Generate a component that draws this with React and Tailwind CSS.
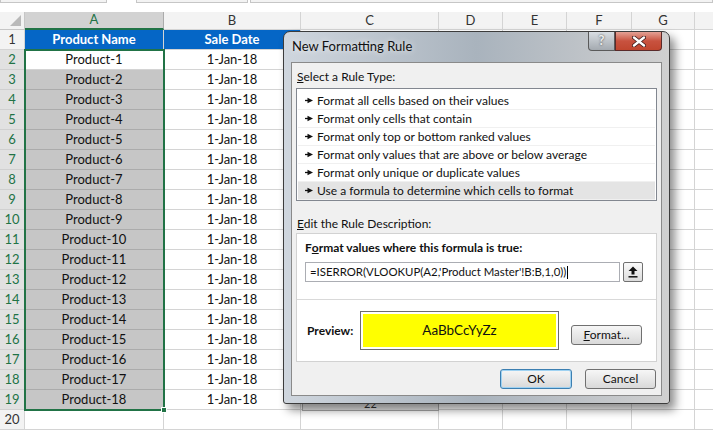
import React from 'react';

const cols = [
  { l: 'A', w: 'w-[139px]' },
  { l: 'B', w: 'w-[137px]' },
  { l: 'C', w: 'w-[138px]' },
  { l: 'D', w: 'w-[64px]' },
  { l: 'E', w: 'w-[64px]' },
  { l: 'F', w: 'w-[65px]' },
  { l: 'G', w: 'w-[63px]' },
];

const rules = [
  'Format all cells based on their values',
  'Format only cells that contain',
  'Format only top or bottom ranked values',
  'Format only values that are above or below average',
  'Format only unique or duplicate values',
  'Use a formula to determine which cells to format',
];

const Arrow = () => (
  <svg width="8" height="7" viewBox="0 0 8 7" className="mr-[4px] shrink-0">
    <path d="M0 3.5h3" stroke="#111" strokeWidth="1.3" />
    <path d="M2.5 0.8 L8 3.5 L2.5 6.2z" fill="#111" />
  </svg>
);

const Row = ({ n }) => {
  const selected = n >= 2 && n <= 19;
  let a = '', b = '';
  if (n === 1) { a = 'Product Name'; b = 'Sale Date'; }
  else if (n <= 19) { a = `Product-${n - 1}`; b = '1-Jan-18'; }
  const aCls = n === 1
    ? 'bg-[#0566c6] text-white font-bold'
    : n === 2 ? 'bg-white' : selected ? 'bg-[#c6c6c6] border-b-[#ababab]' : 'bg-white';
  return (
    <div className="flex h-[20px]">
      <div className={`w-[25px] shrink-0 flex items-center justify-center text-[13px] border-b border-r ${selected ? 'bg-[#e1e1e1] text-[#217346] border-r-[#217346] border-b-[#d0d0d0]' : 'bg-[#f3f3f3] text-[#333] border-[#d4d4d4]'}`}>{n}</div>
      <div className={`w-[139px] shrink-0 flex items-center justify-center text-[13px] border-r border-b border-[#d4d4d4] ${aCls}`}>{a}</div>
      <div className={`w-[137px] shrink-0 flex items-center justify-center text-[13px] border-r border-b border-[#d4d4d4] ${n === 1 ? 'bg-[#0566c6] text-white font-bold' : 'bg-white'}`}>{b}</div>
      <div className="w-[138px] shrink-0 border-r border-b border-[#d4d4d4] bg-white" />
      <div className="w-[64px] shrink-0 border-r border-b border-[#d4d4d4] bg-white" />
      <div className="w-[64px] shrink-0 border-r border-b border-[#d4d4d4] bg-white" />
      <div className="w-[65px] shrink-0 border-r border-b border-[#d4d4d4] bg-white" />
      <div className="w-[63px] shrink-0 border-r border-b border-[#d4d4d4] bg-white" />
      <div className="flex-1 border-b border-[#d4d4d4] bg-white" />
    </div>
  );
};

const Btn = ({ children, className = '' }) => (
  <div className={`flex items-center justify-center rounded-[3px] border text-[12px] text-[#111] bg-gradient-to-b from-[#f6f6f6] via-[#e8e8e8] to-[#d9d9d9] ${className}`}>
    {children}
  </div>
);

const Dialog = () => (
  <div className="absolute left-[283px] top-[31px] w-[387px] h-[373px] rounded-t-[7px] rounded-b-[3px] border border-[#3c3c3c] shadow-[5px_6px_10px_rgba(0,0,0,0.45)] bg-gradient-to-r from-[#cfd6de] via-[#a9b3bd] to-[#d0d0d0] flex flex-col px-[7px] pb-[7px] font-['Lato',sans-serif]">
    {/* title bar */}
    <div className="relative h-[30px] flex items-center pl-[1px]">
      <span className="text-[13px] text-[#111] [text-shadow:0_0_6px_rgba(255,255,255,0.9)]">New Formatting Rule</span>
      <div className="absolute right-[47px] top-0 w-[27px] h-[19px] rounded-bl-[4px] border border-[#5a5a5a] border-t-0 bg-gradient-to-b from-[#d8dde2] to-[#a4aab0] flex items-center justify-center text-[13px] font-bold text-[#eee] [text-shadow:0_0_2px_#333]">?</div>
      <div className="absolute right-0 top-0 w-[47px] h-[19px] rounded-br-[4px] border border-[#5a2a2a] border-t-0 bg-gradient-to-b from-[#e3a195] via-[#c8523f] to-[#c0462f] flex items-center justify-center">
        <svg width="14" height="11" viewBox="0 0 14 11">
          <path d="M2 1.5 L12 9.5 M12 1.5 L2 9.5" stroke="#3a1a1a" strokeWidth="4" strokeLinecap="round" />
          <path d="M2 1.5 L12 9.5 M12 1.5 L2 9.5" stroke="#fff" strokeWidth="2.4" strokeLinecap="round" />
        </svg>
      </div>
    </div>
    {/* content */}
    <div className="flex-1 bg-[#f0f0f0] border border-[#8a8a8a] flex flex-col px-[4px] text-[12px] text-[#111]">
      <div className="h-[25px] flex items-center pl-[1px] pt-[3px]"><span><span className="underline">S</span>elect a Rule Type:</span></div>
      <div className="h-[113px] border border-[#828790] bg-white pt-[3px] px-[1px]">
        {rules.map((r, i) => (
          <div key={r} className={`h-[18px] flex items-center pl-[7px] border-b border-[#f0f0f0] ${i === 5 ? 'bg-[#e4e4e4]' : ''}`}>
            <Arrow />
            <span>{r}</span>
          </div>
        ))}
      </div>
      <div className="h-[32px] flex items-end pl-[1px]"><span><span className="underline">E</span>dit the Rule Description:</span></div>
      <div className="h-[129px] bg-white border border-[#d2d2d2] flex flex-col">
        <div className="h-[66px] border-b border-[#d9d9d9] px-[8px] flex flex-col">
          <div className="h-[28px] flex items-center font-bold">F<span className="underline">o</span>rmat values where this formula is true:</div>
          <div className="flex gap-[3px]">
            <div className="w-[315px] h-[20px] border border-[#abadb3] flex items-center pl-[4px] text-[11.4px]">
              =ISERROR(VLOOKUP(A2,'Product Master'!B:B,1,0))<span className="w-[1px] h-[13px] bg-black ml-[1px]" />
            </div>
            <div className="w-[20px] h-[20px] border border-[#707070] rounded-[2px] bg-gradient-to-b from-[#fafafa] to-[#dcdcdc] flex items-center justify-center">
              <svg width="10" height="12" viewBox="0 0 10 12">
                <path d="M5 0.5 L9.5 5 H6.5 V8.5 H3.5 V5 H0.5z" fill="#111" />
                <path d="M0.5 10.8 H9.5" stroke="#111" strokeWidth="1.5" />
              </svg>
            </div>
          </div>
        </div>
        <div className="flex-1 flex items-center pl-[10px]">
          <span className="font-bold w-[53px]">Preview:</span>
          <div className="w-[199px] h-[39px] border border-[#6d6d6d] p-[2px] bg-white">
            <div className="w-full h-full bg-[#ffff00] flex items-center justify-center text-[13.5px]">AaBbCcYyZz</div>
          </div>
          <Btn className="ml-[12px] w-[71px] h-[20px] border-[#707070] mt-[9px]"><span><span className="underline">F</span>ormat...</span></Btn>
        </div>
      </div>
      <div className="flex justify-end gap-[13px] pt-[7px] pr-[1px]">
        <Btn className="w-[72px] h-[20px] border-[#3c7fb1] shadow-[inset_0_0_0_1px_#9fd2f2]">OK</Btn>
        <Btn className="w-[71px] h-[20px] border-[#707070]">Cancel</Btn>
      </div>
    </div>
  </div>
);

export default function App() {
  return (
    <div className="relative w-[713px] h-[431px] overflow-hidden bg-white font-['Lato',sans-serif] text-[#111]">
      {/* bottom edge of name box / formula bar */}
      <div className="flex h-[12px] bg-white">
        <div className="w-[107px] h-[3px] bg-[#f3f3f3] border border-t-0 border-[#c6c6c6]" />
        <div className="w-[112px] h-[3px] ml-[29px] bg-[#f3f3f3] border border-t-0 border-[#c6c6c6]" />
        <div className="flex-1 h-[3px] ml-[2px] bg-[#f3f3f3] border border-t-0 border-[#c6c6c6]" />
      </div>
      {/* column headers */}
      <div className="flex h-[18px] text-[13px]">
        <div className="w-[25px] shrink-0 bg-[#f3f3f3] border-r border-b border-[#c6c6c6] relative">
          <div className="absolute right-[3px] bottom-[3px] w-0 h-0 border-l-[11px] border-l-transparent border-b-[11px] border-b-[#b9b9b9]" />
        </div>
        {cols.map((c, i) => (
          <div key={c.l} className={`${c.w} shrink-0 flex items-center justify-center border-r ${i === 0 ? 'bg-[#d2d2d2] text-[#217346] border-b-2 border-b-[#217346] border-r-[#ababab]' : 'bg-[#f3f3f3] text-[#333] border-b border-[#d4d4d4]'}`}>{c.l}</div>
        ))}
        <div className="flex-1 bg-[#f3f3f3] border-b border-[#d4d4d4]" />
      </div>
      {Array.from({ length: 20 }, (_, i) => <Row key={i} n={i + 1} />)}
      {/* selection outline A2:A19 */}
      <div className="absolute left-[24px] top-[49px] w-[141px] h-[362px] border-2 border-[#217346] pointer-events-none" />
      <div className="absolute left-[161px] top-[407px] w-[6px] h-[6px] bg-[#217346] border border-white" />
      {/* cell peeking under the dialog */}
      <div className="absolute left-[302px] top-[396px] w-[137px] h-[15px] bg-[#e9e9e9] border border-[#a9a9a9] flex justify-center items-start pt-[1px] text-[11px] leading-none text-[#333]">22</div>
      <Dialog />
    </div>
  );
}
